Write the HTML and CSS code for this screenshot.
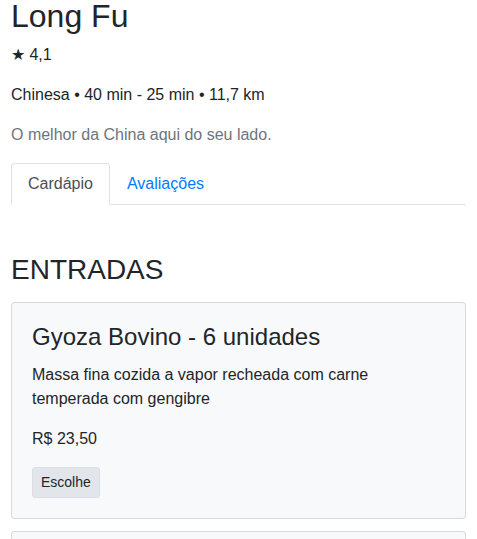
FILE: index.html
```html
<!DOCTYPE html>
<html lang="pt-BR">
<head>
<meta charset="utf-8">
<title>Long Fu</title>
<link rel="stylesheet" href="styles.css">
</head>
<body>
<div class="container">
  <header class="restaurant">
    <h1 class="restaurant-name">Long Fu</h1>
    <p class="rating">★ 4,1</p>
    <p class="info">Chinesa • 40 min - 25 min • 11,7 km</p>
    <p class="tagline">O melhor da China aqui do seu lado.</p>
  </header>

  <ul class="tabs">
    <li class="tab-item"><a class="tab-link active" href="#">Cardápio</a></li>
    <li class="tab-item"><a class="tab-link" href="#">Avaliações</a></li>
  </ul>

  <section class="menu">
    <h3 class="section-title">ENTRADAS</h3>
    <div class="card">
      <div class="card-body">
        <h4 class="card-title">Gyoza Bovino - 6 unidades</h4>
        <p class="card-text">Massa fina cozida a vapor recheada com carne temperada com gengibre</p>
        <p class="card-text">R$ 23,50</p>
        <button class="btn" type="button">Escolhe</button>
      </div>
    </div>
    <div class="card">
      <div class="card-body">
        <h4 class="card-title">Gyoza Suíno - 6 unidades</h4>
        <p class="card-text">Massa fina cozida a vapor recheada com carne suína</p>
        <p class="card-text">R$ 22,00</p>
        <button class="btn" type="button">Escolhe</button>
      </div>
    </div>
  </section>
</div>
</body>
</html>
```

FILE: styles.css
```css
* { box-sizing: border-box; }

html, body {
  margin: 0;
  padding: 0;
  background: #fff;
}

body {
  font-family: "Liberation Sans", Arial, sans-serif;
  font-size: 16px;
  line-height: 1.5;
  color: #212529;
}

.container {
  padding: 0 11px;
}

.restaurant-name {
  font-size: 32px;
  font-weight: 400;
  line-height: 32px;
  margin: 0 0 11px;
}

.rating,
.info,
.tagline {
  margin: 0 0 16px;
}

.tagline {
  color: #6c757d;
}

.tabs {
  display: flex;
  list-style: none;
  margin: 0;
  padding: 0;
  border-bottom: 1px solid #dee2e6;
}

.tab-item {
  margin-bottom: -1px;
}

.tab-link {
  display: block;
  padding: 8px 16px;
  border: 1px solid transparent;
  border-top-left-radius: 4px;
  border-top-right-radius: 4px;
  color: #007bff;
  text-decoration: none;
}

.tab-link.active {
  color: #495057;
  background: #fff;
  border-color: #dee2e6 #dee2e6 #fff;
}

.menu {
  padding-top: 48px;
}

.section-title {
  font-size: 28px;
  font-weight: 400;
  line-height: 1.2;
  margin: 0 0 15px;
}

.card {
  background: #f8f9fa;
  border: 1px solid rgba(0, 0, 0, 0.125);
  border-radius: 4px;
  margin-bottom: 12px;
}

.card-body {
  padding: 20px;
}

.card-title {
  font-size: 24px;
  font-weight: 400;
  line-height: 1.2;
  margin: 0 0 12px;
}

.card-text {
  margin: 0 0 16px;
}

.btn {
  display: inline-block;
  font-family: inherit;
  font-size: 14px;
  line-height: 1.5;
  padding: 4px 8px;
  color: #212529;
  background: #e2e6ea;
  border: 1px solid #dae0e5;
  border-radius: 3px;
  cursor: pointer;
}
```
